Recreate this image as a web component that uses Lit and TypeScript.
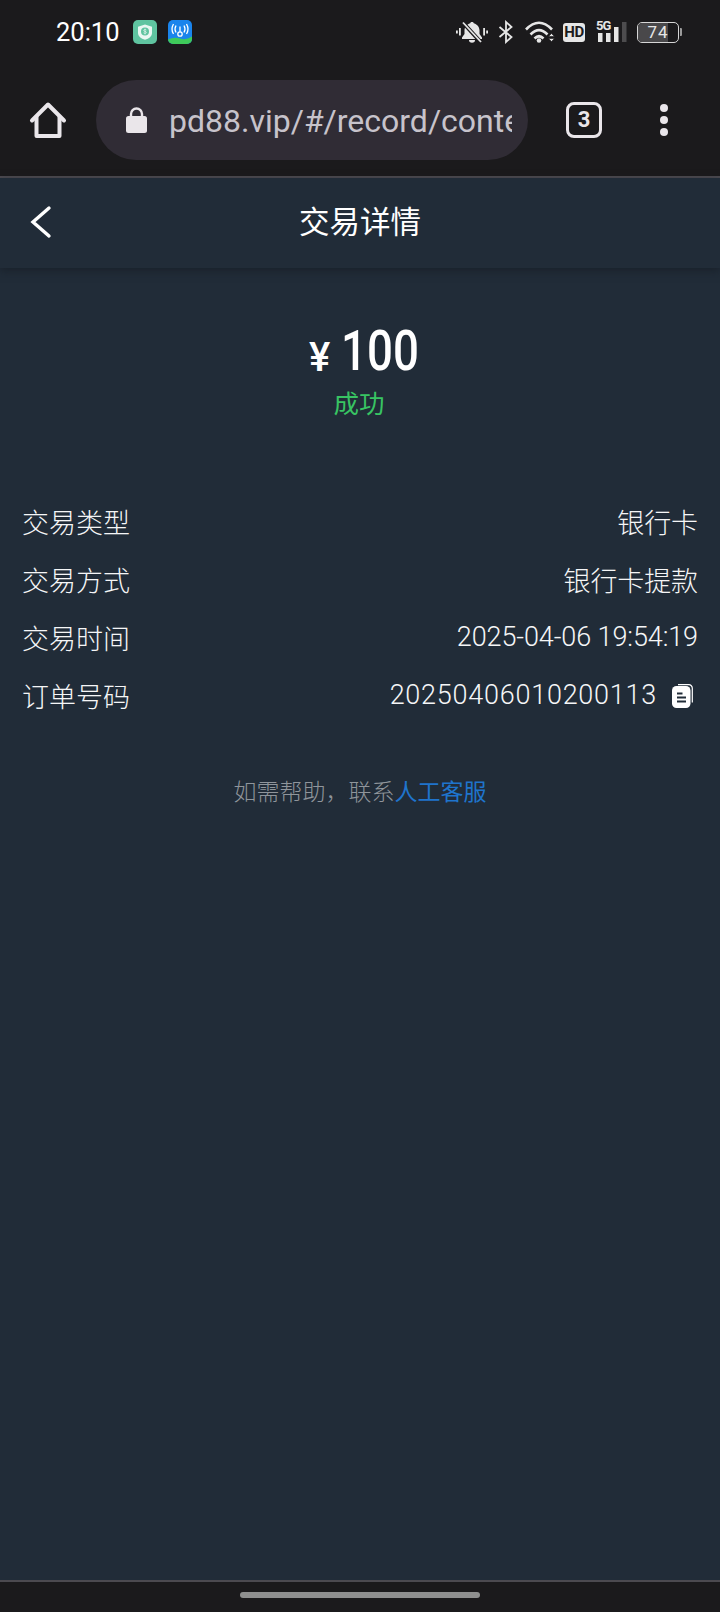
import { LitElement, html, css, svg } from "lit";
import { customElement } from "lit/decorators.js";

const rows = [
  { label: "交易类型", value: "银行卡" },
  { label: "交易方式", value: "银行卡提款" },
  { label: "交易时间", value: "2025-04-06 19:54:19" },
  { label: "订单号码", value: "20250406010200113", copy: true },
];

const shieldApp = svg`<svg width="24" height="24" viewBox="0 0 24 24">
  <rect width="24" height="24" rx="5" fill="#5fc4a0"/>
  <path d="M12 4.500l7 2.300v6c0 3.600-3 5.800-7 7-4-1.200-7-3.400-7-7v-6z" fill="#e9f7f2"/>
  <circle cx="12" cy="11.500" r="4" fill="#5fc4a0"/>
  <path d="M13.400 10c-.4-.6-2.600-.8-2.700.4-.1 1.300 2.800.7 2.700 2.100-.1 1.100-2.400 1-2.900.3M12 8.600v5.800" stroke="#e9f7f2" stroke-width=".7" fill="none"/>
</svg>`;

const wifiApp = svg`<svg width="24" height="24" viewBox="0 0 24 24">
  <rect width="24" height="24" rx="5" fill="#1a84ec"/>
  <path d="M0 19.500q6-3 12-1t12-2V19a5 5 0 0 1-5 5H5a5 5 0 0 1-5-5z" fill="#3fca5a"/>
  <circle cx="12" cy="14" r="2.200" fill="none" stroke="#fff" stroke-width="1.300"/>
  <path d="M12 6.500v5.200M8 5.500q-2 3.500 0 7M16 5.500q2 3.500 0 7M5.500 4q-3 5.500 0 10M18.500 4q3 5.500 0 10" stroke="#fff" stroke-width="1.300" fill="none"/>
</svg>`;

const bellOff = svg`<svg width="32" height="24" viewBox="0 0 32 24" fill="#e6e6e6">
  <path d="M16 2c-.9 0-1.600.5-1.800 1.300C10.500 4.300 8.500 7.500 8.500 10.500v3.500L6 17.500V19h20v-1.500L23.500 14v-3.500c0-3-2-6.200-5.700-7.200C17.600 2.500 16.900 2 16 2z"/>
  <path d="M13 20h6a3 2.800 0 0 1-6 0z"/>
  <path d="M6 1.500l19.500 21.500" stroke="#1b1a1c" stroke-width="4"/>
  <path d="M7 2.500l18 19.500" stroke="#e6e6e6" stroke-width="1.800"/>
  <rect x="0" y="10.500" width="1.800" height="3"/><rect x="3" y="8" width="1.800" height="7.500"/>
  <rect x="27.200" y="8" width="1.800" height="7.500"/><rect x="30.200" y="10.500" width="1.800" height="3"/>
</svg>`;

const bluetooth = svg`<svg width="16" height="24" viewBox="0 0 16 24" fill="none" stroke="#e6e6e6" stroke-width="1.800">
  <path d="M1.500 7l12 10-5.500 5V2l5.500 5-12 10"/>
</svg>`;

const wifi = svg`<svg width="30" height="24" viewBox="0 0 30 24" fill="none">
  <path d="M1 9.500Q14-4 27 9.500M5.500 14.500Q14 6 22.500 14.500M9.500 18.500Q14 14 18.500 18.500" stroke="#e6e6e6" stroke-width="2.600"/>
  <circle cx="14" cy="20.500" r="2.300" fill="#e6e6e6"/>
  <path d="M23.500 16.500l3-3 3 3zM23.500 18.500l3 3 3-3z" fill="#e6e6e6" stroke="#1b1a1c" stroke-width=".6"/>
</svg>`;

const signal = svg`<svg width="32" height="24" viewBox="0 0 32 24" fill="#e6e6e6">
  <rect x="2" y="13" width="4.500" height="9"/><rect x="10" y="13" width="4.500" height="9"/>
  <rect x="18" y="7" width="4.500" height="15"/><rect x="26" y="2" width="4.500" height="20" fill="#4d4c4e"/>
</svg>`;

const home = svg`<svg width="38" height="38" viewBox="0 0 38 38" fill="none" stroke="#eae6ea" stroke-width="4" stroke-linejoin="round" stroke-linecap="round">
  <path d="M3 19.500L19 3.500l16 16"/>
  <path d="M7.500 16V35h23V16"/>
</svg>`;

const lock = svg`<svg width="21" height="27" viewBox="0 0 21 27" fill="#eae6ea">
  <rect x="0" y="9" width="21" height="17" rx="2.500"/>
  <path d="M5 10V7a5.500 5.500 0 0 1 11 0v3" fill="none" stroke="#eae6ea" stroke-width="2.400"/>
</svg>`;

const back = svg`<svg width="22" height="36" viewBox="0 0 22 36" fill="none" stroke="#fff" stroke-width="3.400" stroke-linecap="round">
  <path d="M19 4L3 18l16 14"/>
</svg>`;

const copy = svg`<svg width="21" height="24" viewBox="0 0 21 24">
  <path d="M6 .7h10.500a3.500 3.500 0 0 1 3.800 3.800v14" fill="none" stroke="#fff" stroke-width="1.200"/>
  <rect x="0" y="2" width="18.500" height="22" rx="4.500" fill="#fff"/>
  <path d="M5 9.500h5.500M5 13.500h9M5 17.500h9" stroke="#212c38" stroke-width="1.800"/>
</svg>`;

@customElement("app-root")
export class AppRoot extends LitElement {
  static styles = css`
    :host {
      display: flex;
      flex-direction: column;
      width: 720px;
      height: 1612px;
      background: #1b1a1c;
      font-family: Roboto, "Noto Sans CJK SC", sans-serif;
      overflow: hidden;
    }
    .status {
      height: 64px;
      flex: none;
      display: flex;
      align-items: center;
      padding: 0 38px 0 56px;
      color: #fff;
      box-sizing: border-box;
    }
    .time {
      font-size: 25.5px;
      font-weight: 400;
      width: 77px;
    }
    .apps {
      display: flex;
      gap: 11px;
    }
    .apps svg,
    .sys svg {
      display: block;
    }
    .sys {
      margin-left: auto;
      display: flex;
      align-items: center;
    }
    .bell { margin-right: 10px; }
    .bt { margin-right: 11px; }
    .wifi { margin-right: 8px; }
    .hd {
      width: 22px;
      height: 19px;
      border-radius: 3px;
      background: #e6e6e6;
      color: #1b1a1c;
      font: 700 15px/19px Roboto, sans-serif;
      letter-spacing: -0.5px;
      text-align: center;
      margin-right: 11px;
    }
    .net {
      position: relative;
      margin-right: 9px;
    }
    .net span {
      position: absolute;
      left: 0;
      top: 0;
      font: 700 13px/12px Roboto, sans-serif;
      color: #e6e6e6;
      letter-spacing: -1px;
    }
    .battery {
      display: flex;
      align-items: center;
    }
    .cell {
      position: relative;
      width: 42px;
      height: 21px;
      box-sizing: border-box;
      border: 1.5px solid #d6d6d6;
      border-radius: 5px;
      overflow: hidden;
      text-align: center;
      font: 400 17px/18px Roboto, sans-serif;
      letter-spacing: 1px;
      color: #e6e6e6;
    }
    .fill {
      position: absolute;
      left: 0;
      top: 0;
      bottom: 0;
      background: #49484a;
    }
    .cell span {
      position: relative;
    }
    .tip {
      width: 2px;
      height: 8px;
      margin-left: 1px;
      background: #9a9a9a;
      border-radius: 0 1px 1px 0;
    }
    .toolbar {
      height: 112px;
      flex: none;
      display: flex;
      align-items: center;
      padding-left: 29px;
      box-sizing: border-box;
    }
    .toolbar svg {
      display: block;
    }
    .pill {
      margin-left: 29px;
      width: 432px;
      height: 80px;
      box-sizing: border-box;
      border-radius: 40px;
      background: #302c35;
      display: flex;
      align-items: center;
      padding-left: 30px;
      padding-right: 16px;
      flex: none;
    }
    .url {
      margin-left: 22px;
      font-size: 32px;
      color: #c7c3cb;
      white-space: nowrap;
      overflow: hidden;
      flex: 1;
      min-width: 0;
      padding-top: 1px;
    }
    .tabs {
      margin-left: 38px;
      width: 30px;
      height: 30px;
      border: 3px solid #eae6ea;
      border-radius: 8px;
      display: flex;
      align-items: center;
      justify-content: center;
      color: #eae6ea;
      font: 700 22px/1 Roboto, sans-serif;
    }
    .dots {
      margin-left: 58px;
      display: flex;
      flex-direction: column;
      gap: 4px;
    }
    .dots i {
      width: 8px;
      height: 8px;
      border-radius: 50%;
      background: #eae6ea;
    }
    .page {
      flex: 1;
      min-height: 0;
      background: #212c38;
      border-top: 2px solid #4c4a50;
      border-bottom: 2px solid #4c4a50;
      display: flex;
      flex-direction: column;
    }
    .header {
      position: relative;
      height: 90px;
      box-sizing: border-box;
      padding-bottom: 6px;
      flex: none;
      display: flex;
      align-items: center;
      justify-content: center;
      color: #fff;
      font-size: 30.5px;
      font-weight: 400;
      box-shadow: 0 3px 8px rgba(20, 26, 33, 0.55);
    }
    .back {
      position: absolute;
      left: 30px;
      top: 26px;
    }
    .back svg {
      display: block;
    }
    .amount {
      margin-top: 49px;
      height: 68px;
      padding-left: 8px;
      display: flex;
      justify-content: center;
      align-items: center;
      color: #fff;
    }
    .yen {
      font-size: 40px;
      font-weight: 500;
      margin: 12px 11px 0 0;
    }
    .num {
      display: inline-block;
      font-size: 55px;
      font-weight: 500;
      line-height: 68px;
      width: 78px;
      transform: scaleX(0.83);
      transform-origin: left center;
      white-space: nowrap;
    }
    .state {
      margin-top: 2px;
      padding-right: 2px;
      text-align: center;
      color: #38c463;
      font-size: 25.5px;
      font-weight: 400;
      line-height: 34px;
    }
    .list {
      margin-top: 71px;
      padding: 0 22px;
      display: flex;
      flex-direction: column;
    }
    .row {
      height: 58px;
      display: flex;
      align-items: center;
      justify-content: space-between;
      color: #f5f6f7;
      font-size: 27px;
      font-weight: 300;
      white-space: nowrap;
    }
    .value {
      display: flex;
      align-items: center;
      letter-spacing: -0.1px;
    }
    .value.copy {
      letter-spacing: 0.75px;
    }
    .value svg {
      display: block;
      margin: 2px 5px 0 15px;
    }
    .help {
      margin-top: 52px;
      text-align: center;
      font-size: 23px;
      font-weight: 300;
      line-height: 34px;
      color: #8f959b;
    }
    .help span {
      color: #1f74cc;
      font-weight: 400;
    }
    .nav {
      height: 30px;
      flex: none;
      display: flex;
      justify-content: center;
      padding-top: 10px;
      box-sizing: border-box;
    }
    .nav i {
      width: 240px;
      height: 6px;
      border-radius: 3px;
      background: #8f8f8f;
    }
  `;

  render() {
    return html`
      <div class="status">
        <div class="time">20:10</div>
        <div class="apps">${shieldApp}${wifiApp}</div>
        <div class="sys">
          <div class="bell">${bellOff}</div>
          <div class="bt">${bluetooth}</div>
          <div class="wifi">${wifi}</div>
          <div class="hd">HD</div>
          <div class="net"><span>5G</span>${signal}</div>
          <div class="battery">
            <div class="cell"><div class="fill" style="width: 74%"></div><span>74</span></div>
            <div class="tip"></div>
          </div>
        </div>
      </div>
      <div class="toolbar">
        ${home}
        <div class="pill">
          ${lock}
          <div class="url">pd88.vip/#/record/content</div>
        </div>
        <div class="tabs">3</div>
        <div class="dots"><i></i><i></i><i></i></div>
      </div>
      <div class="page">
        <div class="header">
          <div class="back">${back}</div>
          交易详情
        </div>
        <div class="amount"><span class="yen">¥</span><span class="num">100</span></div>
        <div class="state">成功</div>
        <div class="list">
          ${rows.map(
            (r) => html`<div class="row">
              <div>${r.label}</div>
              <div class="value ${r.copy ? "copy" : ""}">${r.value}${r.copy ? copy : ""}</div>
            </div>`
          )}
        </div>
        <div class="help">如需帮助，联系<span>人工客服</span></div>
      </div>
      <div class="nav"><i></i></div>
    `;
  }
}
